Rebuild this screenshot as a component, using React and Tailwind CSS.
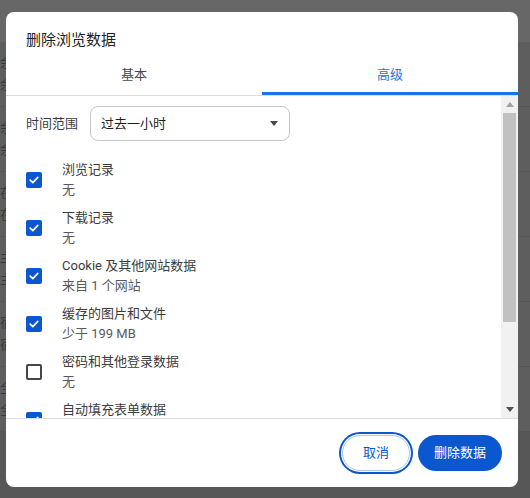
import React from "react";

const FONT = { fontFamily: 'Roboto, "Noto Sans CJK SC", sans-serif' };

function Check() {
  return (
    <span className="flex h-4 w-4 shrink-0 items-center justify-center rounded-[2px] bg-[#0b57d0]">
      <svg width="10" height="8" viewBox="0 0 10 8" fill="none">
        <path d="M1.2 4.1 L3.8 6.6 L8.8 1.4" stroke="white" strokeWidth="1.6" strokeLinecap="round" strokeLinejoin="round" />
      </svg>
    </span>
  );
}

function Unchecked() {
  return <span className="h-4 w-4 shrink-0 rounded-[2px] border-2 border-[#474747] bg-white" />;
}

const rows = [
  { c: true, a: "浏览记录", b: "无" },
  { c: true, a: "下载记录", b: "无" },
  { c: true, a: "Cookie 及其他网站数据", b: "来自 1 个网站" },
  { c: true, a: "缓存的图片和文件", b: "少于 199 MB" },
  { c: false, a: "密码和其他登录数据", b: "无" },
  { c: true, a: "自动填充表单数据", b: "无" },
];

const bgRows = ["余额", "余额", "在线", "主页", "宿舍", "全部"];

export default function App() {
  return (
    <div className="relative h-[498px] w-[530px] overflow-hidden bg-[#5e5e5e]" style={FONT}>
      {/* dimmed page behind */}
      <div className="flex flex-col">
        <div className="h-[42px] bg-[#676767]" />
        {bgRows.map((t, i) => (
          <div key={i} className="flex h-[65px] flex-col justify-center border-b border-[#565656] text-[13px] leading-[22px] text-[#2e3a4a]">
            <span>{t}</span>
            <span className="text-[#3a3a3a]">{t}</span>
          </div>
        ))}
        <div className="h-[80px] bg-[#575757]" />
      </div>

      {/* dialog */}
      <div className="absolute left-[6px] top-[12px] flex h-[475px] w-[512px] flex-col overflow-hidden rounded-[8px] bg-white">
        <div className="pl-5 pt-[18px] text-[15px] leading-[20px] text-[#1f1f1f]">删除浏览数据</div>

        <div className="flex border-b border-[#dadce0]">
          <div className="flex flex-1 flex-col">
            <div className="pb-[7px] pt-[15px] text-center text-[13px] leading-[20px] text-[#444746]">基本</div>
            <div className="h-[3px]" />
          </div>
          <div className="flex flex-1 flex-col">
            <div className="pb-[7px] pt-[15px] text-center text-[13px] leading-[20px] text-[#1a73e8]">高级</div>
            <div className="h-[3px] bg-[#1a73e8]" />
          </div>
        </div>

        <div className="flex min-h-0 flex-1">
          <div className="flex-1 overflow-hidden pl-5 pt-[10px]">
            <div className="flex items-center">
              <span className="w-[64px] text-[13px] leading-[20px] text-[#3c3c3c]">时间范围</span>
              <div className="flex h-[35px] w-[200px] items-center justify-between rounded-[8px] border border-[#c4c7c5] pl-[10px] pr-[11px]">
                <span className="text-[13px] text-[#1f1f1f]">过去一小时</span>
                <svg width="8" height="5" viewBox="0 0 8 5">
                  <path d="M0 0 H8 L4 5 Z" fill="#474747" />
                </svg>
              </div>
            </div>
            <div className="mt-[19px] flex flex-col gap-[8px]">
              {rows.map((r, i) => (
                <div key={i} className="flex h-[40px] shrink-0 items-center gap-5">
                  {r.c ? <Check /> : <Unchecked />}
                  <div className="flex flex-col text-[13px] leading-[20px]">
                    <span className="text-[#3c3c3c]">{r.a}</span>
                    <span className="text-[#5a5a5a]">{r.b}</span>
                  </div>
                </div>
              ))}
            </div>
          </div>
          {/* scrollbar */}
          <div className="flex w-[17px] shrink-0 flex-col bg-[#f1f1f1]">
            <div className="flex h-[17px] items-center justify-center">
              <svg width="8" height="5" viewBox="0 0 8 5">
                <path d="M4 0 L8 5 H0 Z" fill="#a3a3a3" />
              </svg>
            </div>
            <div className="mx-[2px] h-[209px] bg-[#c1c1c1]" />
            <div className="flex-1" />
            <div className="flex h-[18px] items-center justify-center">
              <svg width="8" height="5" viewBox="0 0 8 5">
                <path d="M0 0 H8 L4 5 Z" fill="#505050" />
              </svg>
            </div>
          </div>
        </div>

        <div className="flex h-[69px] shrink-0 items-center justify-end gap-2 border-t border-[#dadce0] pr-4">
          <button className="h-[36px] w-[68px] rounded-full border border-[#a8c7fa] bg-white text-[13px] text-[#0b57d0] ring-2 ring-[#0b57d0] ring-offset-1">
            取消
          </button>
          <button className="h-[36px] w-[84px] rounded-full bg-[#0b57d0] text-[13px] text-white">删除数据</button>
        </div>
      </div>
    </div>
  );
}
